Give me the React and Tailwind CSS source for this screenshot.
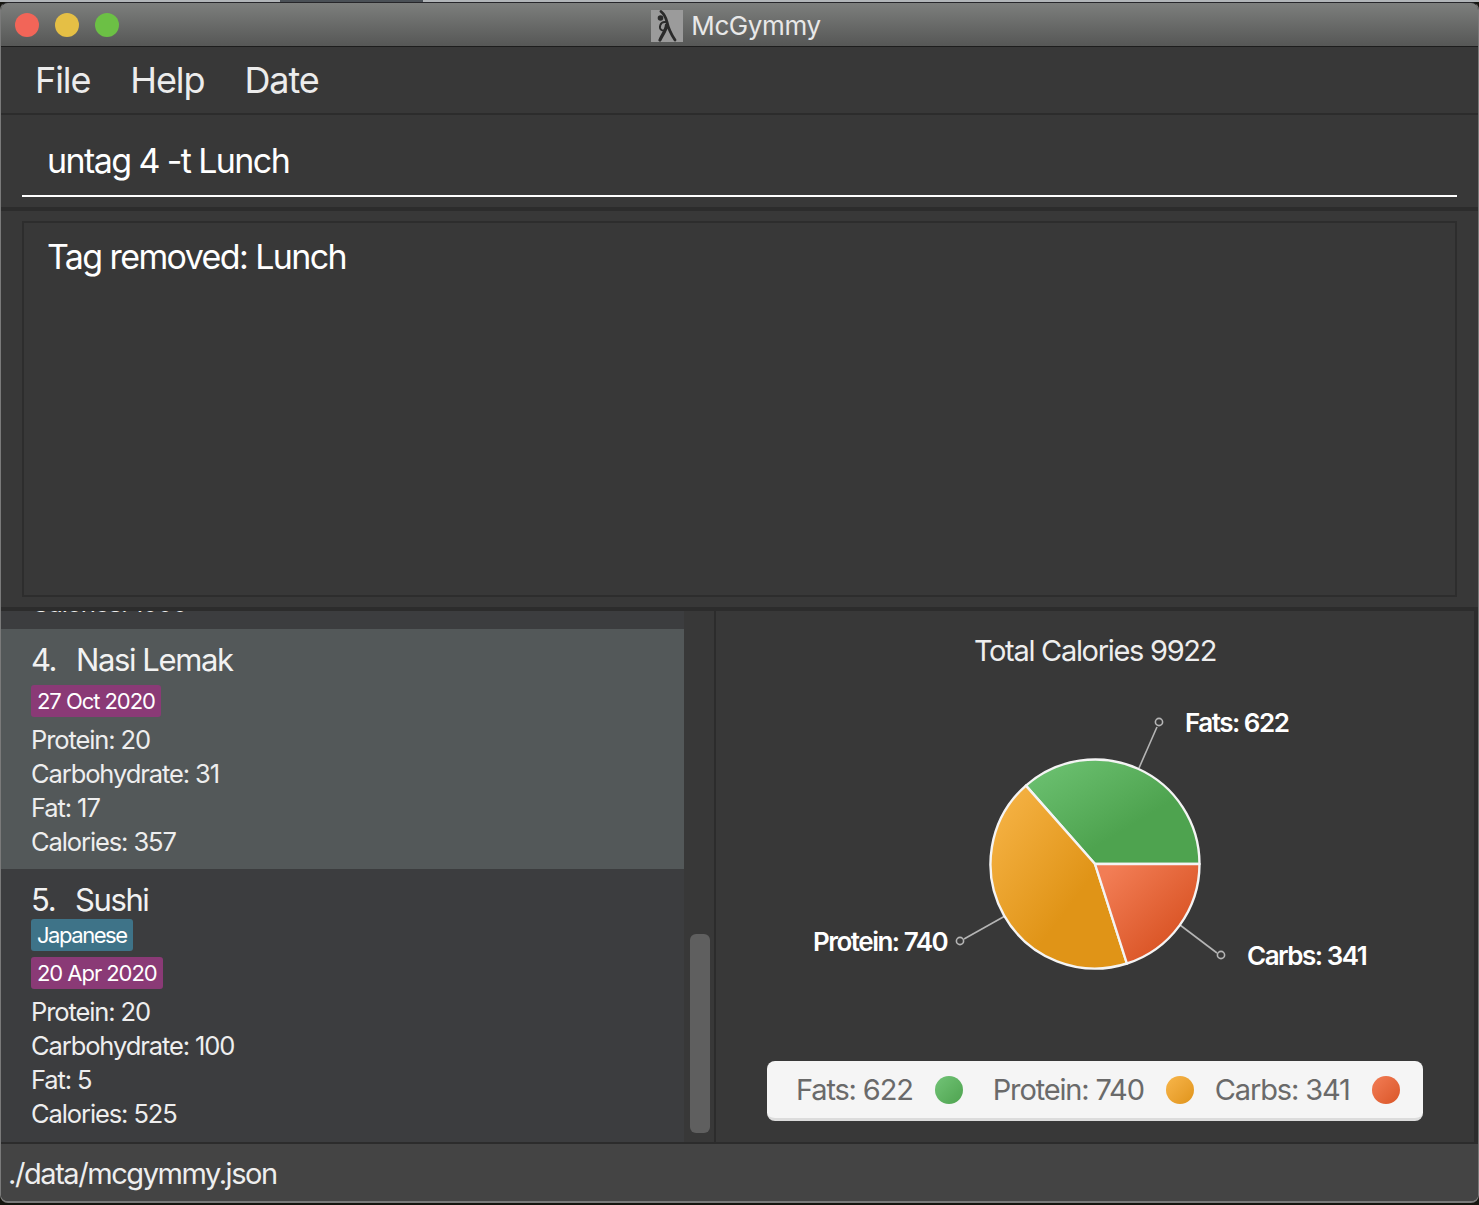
const font = { fontFamily: 'Inter, "Noto Sans", sans-serif' };

function Tag({ children, color, tracking }) {
  return (
    <div className={`w-fit h-[32px] px-[6px] rounded-[3px] text-[22px] leading-[32px] text-white ${tracking} ${color}`}>
      {children}
    </div>
  );
}

function Meal({ index, name, tags, date, values, selected, height, numberWidth }) {
  return (
    <div className={`pl-[30px] pt-[11px] overflow-hidden ${height} ${selected ? 'bg-[#535859]' : ''}`}>
      <div className="flex h-[40px] items-end text-[31px] leading-[40px] tracking-[-1.4px] text-[#f2f2f2]">
        <span className={numberWidth}>{index}.</span>
        <span>{name}</span>
      </div>
      <div className={`flex flex-col gap-[6px] ${selected ? 'mt-[5px]' : 'mt-[-1px]'}`}>
        {tags.map((t) => (
          <Tag key={t} color="bg-[#3e7388]" tracking="tracking-[-1.45px]">{t}</Tag>
        ))}
        <Tag color="bg-[#8a3a76]" tracking="tracking-[-1.05px]">{date}</Tag>
      </div>
      <div className="mt-[6px] text-[25.5px] leading-[34px] tracking-[-1.1px] text-[#eeeeee]">
        {values.map((v) => (
          <div key={v}>{v}</div>
        ))}
      </div>
    </div>
  );
}

function Pie() {
  return (
    <svg className="block mt-[21px] h-[320px] w-[758px]" viewBox="716 690 758 320">
      <defs>
        <linearGradient id="g" x1="0" y1="0" x2="1" y2="1">
          <stop offset="0" stopColor="#6fc474" />
          <stop offset="0.62" stopColor="#4ea34f" />
        </linearGradient>
        <linearGradient id="o" x1="0" y1="0" x2="1" y2="1">
          <stop offset="0" stopColor="#f8b64a" />
          <stop offset="0.62" stopColor="#e09417" />
        </linearGradient>
        <linearGradient id="r" x1="0" y1="0" x2="1" y2="1">
          <stop offset="0.1" stopColor="#f27d55" />
          <stop offset="0.75" stopColor="#da5526" />
        </linearGradient>
      </defs>
      <g stroke="#b5b5b5" strokeWidth="1.6" fill="none">
        <path d="M1139 768 L1157 727" />
        <circle cx="1159" cy="722" r="3.6" />
        <path d="M1005 916 L964 939" />
        <circle cx="960" cy="941" r="3.6" />
        <path d="M1180 925 L1217 953" />
        <circle cx="1221" cy="955" r="3.6" />
      </g>
      <g stroke="#f4f4f4" strokeWidth="2.4" strokeLinejoin="round">
        <path d="M1095 864 L1199.5 864 A104.5 104.5 0 0 0 1025.9 785.6 Z" fill="url(#g)" />
        <path d="M1095 864 L1025.9 785.6 A104.5 104.5 0 0 0 1126.9 963.5 Z" fill="url(#o)" />
        <path d="M1095 864 L1126.9 963.5 A104.5 104.5 0 0 0 1199.5 864 Z" fill="url(#r)" />
      </g>
      <g fontSize="26" fontWeight="600" fill="#ffffff" letterSpacing="-1.5" style={font}>
        <text x="1185" y="732">Fats: 622</text>
        <text x="813" y="951">Protein: 740</text>
        <text x="1247" y="965">Carbs: 341</text>
      </g>
    </svg>
  );
}

function LegendItem({ label, color }) {
  return (
    <div className="flex items-center gap-[22px]">
      <span>{label}</span>
      <span className={`block h-[28px] w-[28px] rounded-full ${color}`} />
    </div>
  );
}

export default function App() {
  return (
    <div style={font} className="h-[1205px] w-[1479px] overflow-hidden bg-[#15150f]">
      <div className="flex h-[2px] bg-[#b1b5b8]">
        <div className="w-[280px]" />
        <div className="w-[143px] bg-[#4a5056]" />
      </div>
      <div className="flex h-[1201px] w-full flex-col overflow-hidden rounded-[8px] border-x border-t border-b-2 border-x-[#7a7a7a] border-t-[#26262a] border-b-[#7a7a7a] bg-[#383838]">
        <div className="relative flex h-[43px] shrink-0 items-center justify-center bg-gradient-to-b from-[#7d7f7d] to-[#565756]">
          <div className="absolute left-[14px] top-[10px] flex gap-[16px]">
            <span className="block h-[24px] w-[24px] rounded-full bg-[#f26558]" />
            <span className="block h-[24px] w-[24px] rounded-full bg-[#e5bf45]" />
            <span className="block h-[24px] w-[24px] rounded-full bg-[#6cc045]" />
          </div>
          <div className="ml-[-7px] mt-[3px] flex items-center gap-[8px]">
            <svg className="h-[32px] w-[32px]" viewBox="0 0 32 32">
              <rect width="32" height="32" fill="#9b9b9b" />
              <circle cx="9.5" cy="8" r="2.8" fill="#2b2b2b" />
              <g fill="none" stroke="#2b2b2b" strokeLinecap="round">
                <path d="M10 1.5 C13 4 15 8 16 12 C17 17 20 24 24 30" strokeWidth="2.8" />
                <path d="M15.5 15 C15 21 11 25 9 30" strokeWidth="3.2" />
                <path d="M14.5 12 C9 11.5 7.5 18 10.5 20 C12.5 21 15 20 16 18" strokeWidth="1.9" />
              </g>
            </svg>
            <span className="text-[26px] leading-[32px] tracking-[-0.4px] text-[#e8e8e8]">McGymmy</span>
          </div>
        </div>
        <div className="h-px shrink-0 bg-[#1d1d1d]" />
        <div className="flex h-[66px] shrink-0 items-center gap-[40px] pl-[34px] text-[36px] tracking-[-1.1px] text-[#ececec]">
          <span>File</span>
          <span>Help</span>
          <span>Date</span>
        </div>
        <div className="h-[2px] shrink-0 bg-[#2c2c2c]" />
        <div className="h-[92px] shrink-0 px-[21px]">
          <div className="h-[82px] border-b-2 border-white pl-[25px] pt-[22px] text-[34px] leading-[48px] tracking-[-1.6px] text-white">
            untag 4 -t Lunch
          </div>
        </div>
        <div className="h-[4px] shrink-0 bg-[#2c2c2c]" />
        <div className="h-[396px] shrink-0 px-[21px] py-[10px]">
          <div className="h-[376px] border-2 border-[#2d2d2d] pl-[23px] pt-[10px] text-[34px] leading-[48px] tracking-[-1.6px] text-white">
            Tag removed: Lunch
          </div>
        </div>
        <div className="h-[4px] shrink-0 bg-[#2c2c2c]" />
        <div className="flex h-[531px] shrink-0">
          <div className="h-full w-[683px] shrink-0 overflow-hidden bg-[#3c3d3f]">
            <div className="h-[18px] overflow-hidden pl-[30px]">
              <div className="mt-[-25px] text-[25.5px] leading-[34px] tracking-[-1.15px] text-[#eeeeee]">Calories: 1000</div>
            </div>
            <Meal
              selected
              height="h-[240px]"
              numberWidth="w-[45px]"
              index="4"
              name="Nasi Lemak"
              tags={[]}
              date="27 Oct 2020"
              values={['Protein: 20', 'Carbohydrate: 31', 'Fat: 17', 'Calories: 357']}
            />
            <Meal
              height="h-[273px]"
              numberWidth="w-[44px]"
              index="5"
              name="Sushi"
              tags={['Japanese']}
              date="20 Apr 2020"
              values={['Protein: 20', 'Carbohydrate: 100', 'Fat: 5', 'Calories: 525']}
            />
          </div>
          <div className="h-full w-[30px] shrink-0 bg-[#383838] pl-[6px] pt-[323px]">
            <div className="h-[199px] w-[20px] rounded-[6px] bg-[#5f5f5f]" />
          </div>
          <div className="h-full w-[2px] shrink-0 bg-[#2c2c2c]" />
          <div className="flex h-full min-w-0 flex-1 flex-col items-center">
            <div className="mt-[21px] h-[37px] text-[29px] leading-[37px] tracking-[-1.3px] text-[#eeeeee]">Total Calories 9922</div>
            <Pie />
            <div className="mt-[51px] flex h-[60px] w-[656px] items-center rounded-[8px] border-b-[3px] border-[#dcdcdc] bg-[#f5f5f5] pl-[29px] text-[29px] tracking-[-1.15px] text-[#6a6a6a]">
              <LegendItem label="Fats: 622" color="bg-gradient-to-br from-[#72c477] to-[#4ea34f]" />
              <div className="w-[30px]" />
              <LegendItem label="Protein: 740" color="bg-gradient-to-br from-[#f8b64a] to-[#e09417]" />
              <div className="w-[21px]" />
              <LegendItem label="Carbs: 341" color="bg-gradient-to-br from-[#f27d55] to-[#da5526]" />
            </div>
          </div>
          <div className="h-full w-[4px] shrink-0 bg-[#2c2c2c]" />
        </div>
        <div className="h-[2px] shrink-0 bg-[#2c2c2c]" />
        <div className="flex min-h-0 flex-1 items-center bg-[#444444] pl-[7px] pt-[2px] text-[29px] tracking-[-1.43px] text-[#eeeeee]">
          ./data/mcgymmy.json
        </div>
      </div>
    </div>
  );
}
